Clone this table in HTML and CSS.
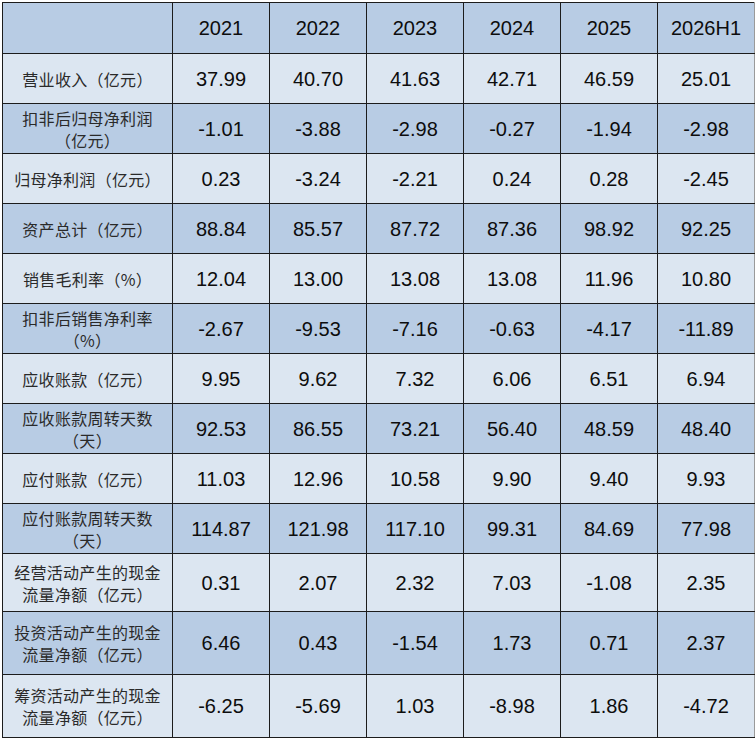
FILE: index.html
```html
<!DOCTYPE html>
<html lang="zh-CN">
<head>
<meta charset="utf-8">
<link rel="stylesheet" href="styles.css">
</head>
<body>
<table class="fin">
  <colgroup>
    <col class="c-label">
    <col class="c-num"><col class="c-num"><col class="c-num"><col class="c-num"><col class="c-num"><col class="c-num">
  </colgroup>
  <thead>
    <tr class="hdr">
      <th></th><th>2021</th><th>2022</th><th>2023</th><th>2024</th><th>2025</th><th>2026H1</th>
    </tr>
  </thead>
  <tbody>
    <tr class="lt"><td class="lbl">营业收入（亿元）</td><td>37.99</td><td>40.70</td><td>41.63</td><td>42.71</td><td>46.59</td><td>25.01</td></tr>
    <tr class="dk"><td class="lbl">扣非后归母净利润<br>（亿元）</td><td>-1.01</td><td>-3.88</td><td>-2.98</td><td>-0.27</td><td>-1.94</td><td>-2.98</td></tr>
    <tr class="lt"><td class="lbl">归母净利润（亿元）</td><td>0.23</td><td>-3.24</td><td>-2.21</td><td>0.24</td><td>0.28</td><td>-2.45</td></tr>
    <tr class="dk"><td class="lbl">资产总计（亿元）</td><td>88.84</td><td>85.57</td><td>87.72</td><td>87.36</td><td>98.92</td><td>92.25</td></tr>
    <tr class="lt"><td class="lbl">销售毛利率（%）</td><td>12.04</td><td>13.00</td><td>13.08</td><td>13.08</td><td>11.96</td><td>10.80</td></tr>
    <tr class="dk"><td class="lbl">扣非后销售净利率<br>（%）</td><td>-2.67</td><td>-9.53</td><td>-7.16</td><td>-0.63</td><td>-4.17</td><td>-11.89</td></tr>
    <tr class="lt"><td class="lbl">应收账款（亿元）</td><td>9.95</td><td>9.62</td><td>7.32</td><td>6.06</td><td>6.51</td><td>6.94</td></tr>
    <tr class="dk"><td class="lbl">应收账款周转天数<br>（天）</td><td>92.53</td><td>86.55</td><td>73.21</td><td>56.40</td><td>48.59</td><td>48.40</td></tr>
    <tr class="lt"><td class="lbl">应付账款（亿元）</td><td>11.03</td><td>12.96</td><td>10.58</td><td>9.90</td><td>9.40</td><td>9.93</td></tr>
    <tr class="dk"><td class="lbl">应付账款周转天数<br>（天）</td><td>114.87</td><td>121.98</td><td>117.10</td><td>99.31</td><td>84.69</td><td>77.98</td></tr>
    <tr class="lt r58"><td class="lbl">经营活动产生的现金<br>流量净额（亿元）</td><td>0.31</td><td>2.07</td><td>2.32</td><td>7.03</td><td>-1.08</td><td>2.35</td></tr>
    <tr class="dk r63"><td class="lbl">投资活动产生的现金<br>流量净额（亿元）</td><td>6.46</td><td>0.43</td><td>-1.54</td><td>1.73</td><td>0.71</td><td>2.37</td></tr>
    <tr class="lt r63"><td class="lbl">筹资活动产生的现金<br>流量净额（亿元）</td><td>-6.25</td><td>-5.69</td><td>1.03</td><td>-8.98</td><td>1.86</td><td>-4.72</td></tr>
  </tbody>
</table>
</body>
</html>
```

FILE: styles.css
```css
html, body {
  margin: 0;
  padding: 0;
  background: #ffffff;
}

.fin {
  margin: 2px 0 0 2px;
  border-collapse: collapse;
  table-layout: fixed;
  width: 751px;
  font-family: "Liberation Sans", Arial, "Noto Sans CJK SC", sans-serif;
  color: #0d0d0d;
}

.c-label { width: 170px; }
.c-num { width: 97px; }

.fin th,
.fin td {
  border: 1px solid #1c1c1c;
  text-align: center;
  vertical-align: middle;
  padding: 0;
  font-size: 20px;
  font-weight: normal;
  line-height: 22px;
}

.fin th:last-child,
.fin td:last-child {
  border-right-color: #9a9a9a;
}

.hdr { height: 51px; background: #b8cce4; }
.fin tbody tr { height: 50px; }
.fin tbody tr.r58 { height: 58px; }
.fin tbody tr.r63 { height: 63px; }

.lt { background: #dce6f1; }
.dk { background: #b8cce4; }

.fin td.lbl {
  font-family: "Noto Sans CJK SC", "Liberation Sans", sans-serif;
  font-size: 16px;
  line-height: 22px;
  letter-spacing: 0.3px;
  color: #2a2a2a;
}
```
